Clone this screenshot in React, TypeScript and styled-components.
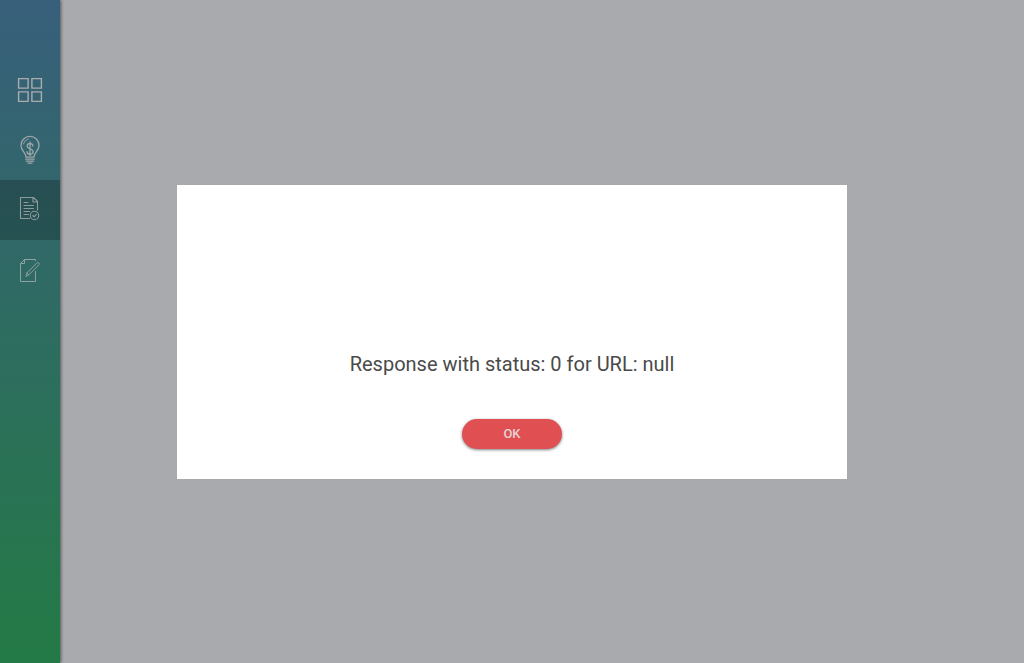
import React from 'react';
import styled, { createGlobalStyle } from 'styled-components';

const GlobalStyle = createGlobalStyle`
  * { box-sizing: border-box; }
  body {
    margin: 0;
    background: #a9aaae;
    font-family: Roboto, "Liberation Sans", sans-serif;
  }
`;

const Page = styled.div`
  display: flex;
  min-height: 100vh;
`;

const Sidebar = styled.nav`
  flex: 0 0 60px;
  padding-top: 60px;
  background: linear-gradient(180deg, #385f7b 0%, #2f6a64 43%, #237a45 100%);
  box-shadow: 1px 0 3px rgba(0, 0, 0, 0.5);
`;

const NavLink = styled.a<{ $active?: boolean }>`
  display: flex;
  align-items: center;
  justify-content: center;
  height: 60px;
  color: #a9adae;
  background: ${({ $active }) => ($active ? 'rgba(0, 0, 0, 0.22)' : 'transparent')};
`;

const Icon = styled.svg`
  width: 40px;
  height: 40px;
  fill: none;
  stroke: currentColor;
  stroke-linecap: round;
  stroke-linejoin: round;
`;

const Main = styled.main`
  flex: 1;
`;

const Overlay = styled.div`
  position: fixed;
  inset: 0;
  display: flex;
  align-items: center;
  justify-content: center;
`;

const Dialog = styled.section`
  display: flex;
  flex-direction: column;
  align-items: center;
  gap: 40px;
  width: 670px;
  max-width: 90%;
  padding: 164px 24px 30px;
  background: #fff;
`;

const Message = styled.p`
  margin: 0;
  color: #4a4a4a;
  font-size: 20px;
  line-height: 30px;
  text-align: center;
`;

const OkButton = styled.button`
  width: 100px;
  height: 30px;
  padding: 0;
  border: 0;
  border-radius: 15px;
  background: #e05053;
  color: #e6d2d4;
  font-family: inherit;
  font-size: 13px;
  font-weight: 500;
  line-height: 30px;
  box-shadow: 0 1px 3px rgba(0, 0, 0, 0.5);
  cursor: pointer;
`;

export default function App() {
  return (
    <>
      <GlobalStyle />
      <Page>
        <Sidebar aria-label="Main">
          <NavLink href="#dashboard" aria-label="Dashboard">
            <Icon viewBox="0 0 40 40" strokeWidth="1.4">
              <path
                strokeLinejoin="miter"
                d="M8.6 8.6h9.5v9.5H8.600zM21.900 8.600h9.500v9.500h-9.500zM8.600 21.900h9.500v9.500H8.600zM21.900 21.900h9.500v9.500h-9.500z"
              />
            </Icon>
          </NavLink>
          <NavLink href="#ideas" aria-label="Ideas">
            <Icon viewBox="0 0 40 40" strokeWidth="1.3" opacity="0.9">
              <path d="M16 27.2c0-4.600-5-6.200-5-11.800a9 9 0 0 1 18 0c0 5.600-5 7.200-5 11.800z" />
              <path d="M15.800 29.200h8.400M16.300 31.200h7.400M18 33.200h4" />
              <path d="M13.300 14a7 7 0 0 1 5-5" strokeWidth="0.900" />
              <path d="M22.900 16c-.2-1.600-1.300-2.500-2.900-2.500s-2.800.9-2.800 2.500c0 3.500 5.900 2.200 5.900 5.700 0 1.600-1.300 2.500-3 2.500s-3-1-3.100-2.600M20 12v13.700" />
            </Icon>
          </NavLink>
          <NavLink href="#reports" aria-label="Reports" aria-current="page" $active>
            <Icon viewBox="0 0 40 40" strokeWidth="1.1" opacity="0.8">
              <path d="M19.500 28.500h-9v-21h13l4 4v8.500M23 7.500v4.500h4.500" />
              <path d="M14 12.500h4M14 15.500h9.500M14 18.500h9.500M14 21.500h5.500M14 24.500h4.500" />
              <circle cx="24.500" cy="25.500" r="4.200" />
              <path d="M22.800 25.500l1.300 1.300 2.200-2.500" />
            </Icon>
          </NavLink>
          <NavLink href="#notes" aria-label="Notes">
            <Icon viewBox="0 0 40 40" strokeWidth="1" opacity="0.8">
              <path d="M25.500 10.500v-1h-11l-4 4v18h15V21.500M14.500 9.500v4h-4" />
              <path d="M16 26l1-3.200L27.700 12.200l1.900 1.900-10.700 10.700zM17 22.800l1.900 2" />
            </Icon>
          </NavLink>
        </Sidebar>
        <Main />
      </Page>
      <Overlay>
        <Dialog role="alertdialog" aria-modal="true" aria-labelledby="dialog-message">
          <Message id="dialog-message">Response with status: 0 for URL: null</Message>
          <OkButton type="button">OK</OkButton>
        </Dialog>
      </Overlay>
    </>
  );
}
